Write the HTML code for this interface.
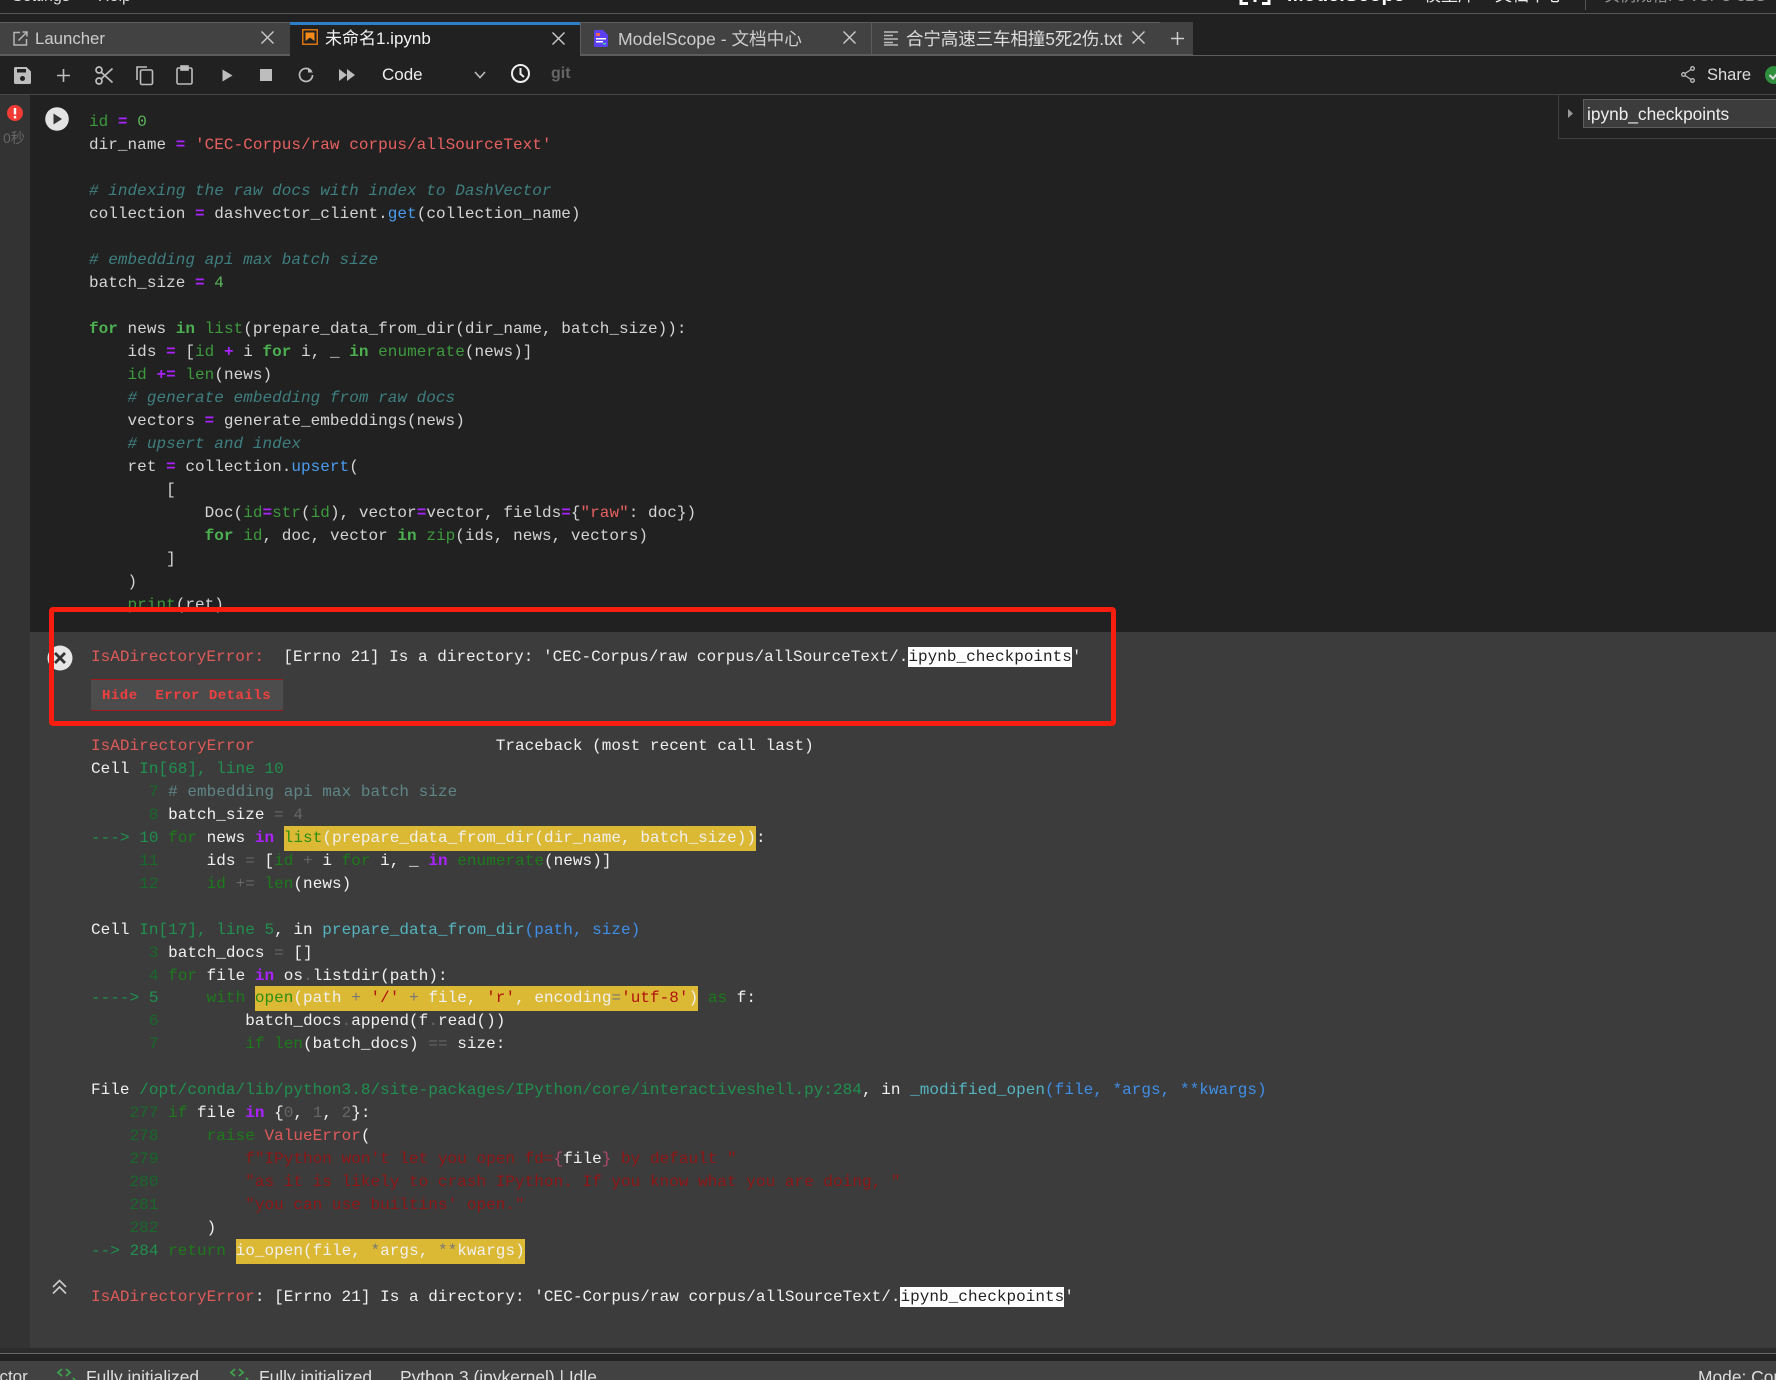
<!DOCTYPE html>
<html lang="zh"><head><meta charset="utf-8"><title>JupyterLab</title>
<style>
html,body{margin:0;padding:0;background:#212121}
#r{position:relative;width:1776px;height:1380px;overflow:hidden;background:#212121;font-family:"Liberation Sans","Noto Sans CJK SC",sans-serif;color:#ccc}
.a{position:absolute}
.t{position:absolute;white-space:nowrap;line-height:24px}
svg{position:absolute;overflow:visible}
pre{margin:0;position:absolute;font-family:"Liberation Mono","Noto Sans CJK SC",monospace;font-size:16px;line-height:23px;letter-spacing:.035px;color:#d4d4d4}
.tab{position:absolute;top:22px;height:33px;background:#424242;border:1px solid #5c5c5c;box-sizing:border-box;border-bottom:1px solid #5c5c5c}
/* code */
.v{color:#3d9a3d}.o{color:#aa22ff;font-weight:bold}.n{color:#5cb85c}.s{color:#e86060}.c{color:#3f7f7f;font-style:italic}.m{color:#4a9cf0}.k{color:#4caf50;font-weight:bold}.b{color:#3d9a3d}
/* traceback */
#tb{color:#f0f0f0;line-height:22.96px}
.e{color:#e05a5a}.g{color:#1f9050}.l{color:#17692b}.h{color:#1c7a1c}.w{color:#aa22ff;font-weight:bold}.d{color:#666}.u{color:#5f8585}.q{color:#54b5c0}.p{color:#3f8fe8}.r{color:#8f1515}.y{background:#dbb935;padding:3px 0 4px}.z{background:#fff;color:#222;padding:1px 0}.ar{color:#1f9050}.vi{color:#b0486e}
</style></head><body><div id="r">

<!-- top bar -->
<div class="t" style="left:12px;top:-15px;font-size:16px;color:#ddd">Settings</div>
<div class="t" style="left:98px;top:-15px;font-size:16px;color:#ddd">Help</div>
<svg style="left:1239px;top:0" width="32" height="6"><path d="M2 -8V3.500H9M30 -8V3.500H23M16 -8V2" fill="none" stroke="#fff" stroke-width="3"/></svg>
<div class="t" style="left:1287px;top:-17px;font-size:20px;font-weight:bold;color:#fff">ModelScope</div>
<div class="t" style="left:1424px;top:-16px;font-size:17px;color:#eee">模型库</div>
<div class="t" style="left:1495px;top:-16px;font-size:17px;color:#eee">文档中心</div>
<div class="a" style="left:1585px;top:0;width:1px;height:10px;background:#555"></div>
<div class="t" style="left:1604px;top:-15px;font-size:16px;color:#999">实例规格: 8 vCPU 32G</div>
<div class="a" style="left:0;top:13px;width:1776px;height:1px;background:#555"></div>

<!-- tabs -->
<div class="tab" style="left:0;width:291px;border-left:0"></div>
<div class="a" style="left:290px;top:22px;width:291px;height:34px;background:#212121;border-top:3px solid #2f7fc8;box-sizing:border-box"></div>
<div class="tab" style="left:580px;width:292px"></div>
<div class="tab" style="left:871px;width:290px"></div>
<div class="tab" style="left:1160px;width:33px;border:0;border-bottom:1px solid #5c5c5c"></div>
<div class="a" style="left:0;top:55px;width:290px;height:1px;background:#5c5c5c"></div>
<div class="a" style="left:580px;top:55px;width:1196px;height:1px;background:#5c5c5c"></div>

<svg style="left:13px;top:31px" width="15" height="15" fill="none" stroke="#b5b5b5" stroke-width="1.500"><path d="M7 1.500H1V14H13.500V8"/><path d="M5.500 9.500L13.500 1.500M9.500 1H14V5.500"/></svg>
<div class="t" style="left:35px;top:27px;font-size:16.800px;color:#ccc">Launcher</div>
<svg style="left:261px;top:31px" width="13" height="13" stroke="#ccc" stroke-width="1.400"><path d="M0.500 0.500L12.500 12.500M12.500 0.500L0.500 12.500"/></svg>

<svg style="left:302px;top:29px" width="16" height="16"><rect x="0.750" y="0.750" width="14.500" height="14.500" fill="none" stroke="#d9730f" stroke-width="1.500"/><path d="M3.500 3.500H12.500V12L8 8.500L3.500 12Z" fill="#f58a1a"/></svg>
<div class="t" style="left:325px;top:27px;font-size:17px;color:#f2f2f2">未命名1.ipynb</div>
<svg style="left:552px;top:32px" width="13" height="13" stroke="#ccc" stroke-width="1.400"><path d="M0.500 0.500L12.500 12.500M12.500 0.500L0.500 12.500"/></svg>

<svg style="left:594px;top:30px" width="14" height="17"><path d="M0 1.500Q0 0 1.500 0H9L14 5V15.500Q14 17 12.500 17H1.500Q0 17 0 15.500Z" fill="#5b3ff0"/><rect x="2" y="3" width="4" height="3" fill="#f0605a"/><rect x="2" y="8" width="10" height="1.500" fill="#fff"/><rect x="2" y="11" width="7" height="1.500" fill="#fff"/><rect x="9" y="13" width="3" height="1.500" fill="#3fd8a8"/></svg>
<div class="t" style="left:618px;top:27px;font-size:17.600px;color:#ccc">ModelScope - 文档中心</div>
<svg style="left:843px;top:31px" width="13" height="13" stroke="#ccc" stroke-width="1.400"><path d="M0.500 0.500L12.500 12.500M12.500 0.500L0.500 12.500"/></svg>

<svg style="left:884px;top:31px" width="14" height="14" stroke="#bbb" stroke-width="1.500"><path d="M0 1H14M0 4.500H9M0 8H14M0 11.500H9M0 14H14"/></svg>
<div class="t" style="left:906px;top:27px;font-size:17.500px;letter-spacing:-0.100px;color:#ddd">合宁高速三车相撞5死2伤.txt</div>
<svg style="left:1132px;top:31px" width="13" height="13" stroke="#ccc" stroke-width="1.400"><path d="M0.500 0.500L12.500 12.500M12.500 0.500L0.500 12.500"/></svg>
<svg style="left:1171px;top:32px" width="13" height="13" stroke="#ccc" stroke-width="1.500"><path d="M6.500 0V13M0 6.500H13"/></svg>

<!-- toolbar -->
<svg style="left:14px;top:67px" width="17" height="17"><path d="M1.500 0H12.500L17 4.500V15.500Q17 17 15.500 17H1.500Q0 17 0 15.500V1.500Q0 0 1.500 0Z" fill="#bdbdbd"/><rect x="3" y="2" width="9" height="3.500" fill="#212121"/><circle cx="8.500" cy="11.500" r="2.500" fill="#212121"/></svg>
<svg style="left:57px;top:69px" width="13" height="13" stroke="#bdbdbd" stroke-width="1.600"><path d="M6.500 0V13M0 6.500H13"/></svg>
<svg style="left:95px;top:66px" width="18" height="19" fill="none" stroke="#bdbdbd" stroke-width="1.700"><circle cx="4" cy="4" r="3"/><circle cx="4" cy="15" r="3"/><path d="M6 6L17.500 16.500M6 13L17.500 2.500"/></svg>
<svg style="left:136px;top:66px" width="18" height="19" fill="none" stroke="#bdbdbd" stroke-width="1.600"><path d="M1 14V1H11"/><rect x="4.500" y="4" width="12" height="14.500" rx="1.500"/></svg>
<svg style="left:176px;top:65px" width="17" height="20" fill="none" stroke="#bdbdbd" stroke-width="1.600"><rect x="1" y="3" width="15" height="16" rx="1.500"/><rect x="5" y="1" width="7" height="4" fill="#bdbdbd"/></svg>
<svg style="left:222px;top:69px" width="11" height="13"><path d="M0.500 0.500L10.500 6.500L0.500 12.500Z" fill="#bdbdbd"/></svg>
<svg style="left:260px;top:69px" width="12" height="12"><rect width="12" height="12" fill="#bdbdbd"/></svg>
<svg style="left:298px;top:67px" width="16" height="16" fill="none" stroke="#bdbdbd" stroke-width="1.700"><path d="M13.500 4.500A6.500 6.500 0 1 0 14.500 8"/><path d="M10 0.500V5.500H15Z" fill="#bdbdbd" stroke="none"/></svg>
<svg style="left:339px;top:69px" width="16" height="12" fill="#bdbdbd"><path d="M0 0L8 6L0 12ZM8 0L16 6L8 12Z"/></svg>
<div class="t" style="left:382px;top:63px;font-size:17px;color:#eee">Code</div>
<svg style="left:474px;top:71px" width="12" height="8" fill="none" stroke="#bbb" stroke-width="1.600"><path d="M1 1L6 6.500L11 1"/></svg>
<svg style="left:511px;top:64px" width="19" height="19" fill="none" stroke="#eee" stroke-width="2"><circle cx="9.500" cy="9.500" r="8.500"/><path d="M9.500 4V10L13 13"/></svg>
<div class="t" style="left:551px;top:62px;font-size:16px;font-weight:bold;color:#666">git</div>
<svg style="left:1681px;top:66px" width="14" height="17" fill="none" stroke="#bbb" stroke-width="1.300"><circle cx="11.500" cy="2.500" r="1.800"/><circle cx="2.500" cy="8.500" r="1.800"/><circle cx="11.500" cy="14.500" r="1.800"/><path d="M10 3.500L4 7.500M4 9.500L10 13.500"/></svg>
<div class="t" style="left:1707px;top:63px;font-size:16.500px;color:#ddd">Share</div>
<svg style="left:1765px;top:66px" width="18" height="18"><circle cx="9" cy="9" r="9" fill="#2f8f3f"/><path d="M4.500 9L8 12.500L13.500 6" fill="none" stroke="#ddd" stroke-width="2"/></svg>
<div class="a" style="left:0;top:94px;width:1776px;height:1px;background:#474747"></div>

<!-- gutter -->
<div class="a" style="left:0;top:95px;width:30px;height:1258px;background:#333"></div>
<svg style="left:7px;top:105px" width="16" height="16"><circle cx="8" cy="8" r="8" fill="#f03c35"/><rect x="6.800" y="3" width="2.400" height="6.500" fill="#fff"/><rect x="6.800" y="11" width="2.400" height="2.400" fill="#fff"/></svg>
<div class="t" style="left:3px;top:126px;font-size:14px;color:#666">0秒</div>

<!-- run button -->
<svg style="left:45px;top:107px" width="24" height="24"><circle cx="12" cy="12" r="11.800" fill="#e3e3e3"/><path d="M8.500 6.500L17 12L8.500 17.500Z" fill="#333"/></svg>

<!-- TOC panel -->
<div class="a" style="left:1558px;top:95px;width:218px;height:44px;border-left:1px solid #3f3f3f;border-bottom:1px solid #3f3f3f;box-sizing:border-box"></div>
<svg style="left:1568px;top:109px" width="5" height="9"><path d="M0 0L5 4.500L0 9Z" fill="#999"/></svg>
<div class="a" style="left:1583px;top:99px;width:200px;height:29px;background:#3c3c3c;border:1px solid #5e5e5e;box-sizing:border-box"></div>
<div class="t" style="left:1587px;top:102px;font-size:17.300px;color:#eee">ipynb_checkpoints</div>

<!-- code -->
<pre style="left:89px;top:111px"><span class="v">id</span> <span class="o">=</span> <span class="n">0</span>
dir_name <span class="o">=</span> <span class="s">'CEC-Corpus/raw corpus/allSourceText'</span>

<span class="c"># indexing the raw docs with index to DashVector</span>
collection <span class="o">=</span> dashvector_client.<span class="m">get</span>(collection_name)

<span class="c"># embedding api max batch size</span>
batch_size <span class="o">=</span> <span class="n">4</span>

<span class="k">for</span> news <span class="k">in</span> <span class="b">list</span>(prepare_data_from_dir(dir_name, batch_size)):
    ids <span class="o">=</span> [<span class="v">id</span> <span class="o">+</span> i <span class="k">for</span> i, _ <span class="k">in</span> <span class="b">enumerate</span>(news)]
    <span class="v">id</span> <span class="o">+=</span> <span class="b">len</span>(news)
    <span class="c"># generate embedding from raw docs</span>
    vectors <span class="o">=</span> generate_embeddings(news)
    <span class="c"># upsert and index</span>
    ret <span class="o">=</span> collection.<span class="m">upsert</span>(
        [
            Doc(<span class="v">id</span><span class="o">=</span><span class="b">str</span>(<span class="v">id</span>), vector<span class="o">=</span>vector, fields<span class="o">=</span>{<span class="s">"raw"</span>: doc})
            <span class="k">for</span> <span class="v">id</span>, doc, vector <span class="k">in</span> <span class="b">zip</span>(ids, news, vectors)
        ]
    )
    <span class="b">print</span>(ret)</pre>

<!-- error area -->
<div class="a" style="left:30px;top:632px;width:1746px;height:716px;background:#3c3c3c"></div>
<div class="a" style="left:0;top:1348px;width:1776px;height:5px;background:#2c2c2c"></div>
<div class="a" style="left:0;top:1353px;width:1776px;height:1px;background:#666"></div>
<div class="a" style="left:0;top:1354px;width:1776px;height:7px;background:#222"></div>
<div class="a" style="left:0;top:1361px;width:1776px;height:19px;background:#424242"></div>

<svg style="left:47px;top:645px" width="26" height="26"><circle cx="13" cy="13" r="12.500" fill="#e6e6e6"/><path d="M8 8L18 18M18 8L8 18" stroke="#333" stroke-width="2.800"/></svg>
<pre style="left:91px;top:646px;color:#eee;letter-spacing:.015px"><span class="e">IsADirectoryError:</span>  [Errno 21] Is a directory: 'CEC-Corpus/raw corpus/allSourceText/.<span class="z">ipynb_checkpoints</span>'</pre>
<div class="a" style="left:91px;top:679px;width:192px;height:32px;background:#4c4c4c;border-top:1px solid #a01818;border-bottom:1px solid #a01818;box-sizing:border-box"></div>
<pre style="left:102px;top:685px;font-size:14px;letter-spacing:.5px;font-weight:bold;color:#ef4040">Hide  Error Details</pre>

<div class="a" style="left:49px;top:607px;width:1067px;height:119px;border:5px solid #f71e10;border-radius:4px;box-sizing:border-box"></div>

<pre id="tb" style="left:91px;top:735px"><span class="e">IsADirectoryError</span>                         Traceback (most recent call last)
Cell <span class="g">In[68], line 10</span>
      <span class="l">7</span> <span class="u"># embedding api max batch size</span>
      <span class="l">8</span> batch_size <span class="d">= 4</span>
<span class="ar">---&gt;</span> <span class="g">10</span> <span class="h">for</span> news <span class="w">in</span> <span class="y"><span style="color:#2c8f10">list</span>(prepare_data_from_dir(dir_name, batch_size))</span>:
     <span class="l">11</span>     ids <span class="d">=</span> [<span class="h">id</span> <span class="d">+</span> i <span class="h">for</span> i, _ <span class="w">in</span> <span class="h">enumerate</span>(news)]
     <span class="l">12</span>     <span class="h">id</span> <span class="d">+=</span> <span class="h">len</span>(news)

Cell <span class="g">In[17], line 5</span>, in <span class="q">prepare_data_from_dir</span><span class="p">(path, size)</span>
      <span class="l">3</span> batch_docs <span class="d">=</span> []
      <span class="l">4</span> <span class="h">for</span> file <span class="w">in</span> os<span class="d">.</span>listdir(path):
<span class="ar">----&gt;</span> <span class="g">5</span>     <span class="h">with</span> <span class="y"><span style="color:#2c8f10">open</span>(path <span style="color:#777">+</span> <span style="color:#b01010">'/'</span> <span style="color:#777">+</span> file, <span style="color:#b01010">'r'</span>, encoding<span style="color:#777">=</span><span style="color:#b01010">'utf-8'</span>)</span> <span class="h">as</span> f:
      <span class="l">6</span>         batch_docs<span class="d">.</span>append(f<span class="d">.</span>read())
      <span class="l">7</span>         <span class="h">if</span> <span class="h">len</span>(batch_docs) <span class="d">==</span> size:

File <span class="g">/opt/conda/lib/python3.8/site-packages/IPython/core/interactiveshell.py:284</span>, in <span class="q">_modified_open</span><span class="p">(file, *args, **kwargs)</span>
    <span class="l">277</span> <span class="h">if</span> file <span class="w">in</span> {<span class="d">0</span>, <span class="d">1</span>, <span class="d">2</span>}:
    <span class="l">278</span>     <span class="h">raise</span> <span class="e">ValueError</span>(
    <span class="l">279</span>         <span class="r">f"IPython won't let you open fd=</span><span class="vi">{</span>file<span class="vi">}</span><span class="r"> by default "</span>
    <span class="l">280</span>         <span class="r">"as it is likely to crash IPython. If you know what you are doing, "</span>
    <span class="l">281</span>         <span class="r">"you can use builtins' open."</span>
    <span class="l">282</span>     )
<span class="ar">--&gt;</span> <span class="g">284</span> <span class="h">return</span> <span class="y">io_open(file, <span style="color:#777">*</span>args, <span style="color:#777">**</span>kwargs)</span>

<span class="e">IsADirectoryError</span>: [Errno 21] Is a directory: 'CEC-Corpus/raw corpus/allSourceText/.<span class="z">ipynb_checkpoints</span>'</pre>

<svg style="left:52px;top:1279px" width="15" height="15" fill="none" stroke="#ccc" stroke-width="1.600"><path d="M1 8L7.500 1.500L14 8M1 14.500L7.500 8L14 14.500"/></svg>

<!-- status bar -->
<div class="t" style="left:-10px;top:1365px;font-size:17px;color:#ddd">ector</div>
<svg style="left:57px;top:1368px" width="20" height="12" fill="none" stroke="#3fa34d" stroke-width="1.800"><path d="M5 1L1 4.500L5 8M9 1L13 4.500L9 8M16 10L18 12"/></svg>
<div class="t" style="left:86px;top:1365px;font-size:17.400px;color:#ddd">Fully initialized</div>
<svg style="left:230px;top:1368px" width="20" height="12" fill="none" stroke="#3fa34d" stroke-width="1.800"><path d="M5 1L1 4.500L5 8M9 1L13 4.500L9 8M16 10L18 12"/></svg>
<div class="t" style="left:259px;top:1365px;font-size:17.400px;color:#ddd">Fully initialized</div>
<div class="t" style="left:400px;top:1365px;font-size:17.400px;color:#ddd">Python 3 (ipykernel) | Idle</div>
<div class="t" style="left:1698px;top:1365px;font-size:17.400px;color:#ddd">Mode: Command</div>
</div></body></html>
